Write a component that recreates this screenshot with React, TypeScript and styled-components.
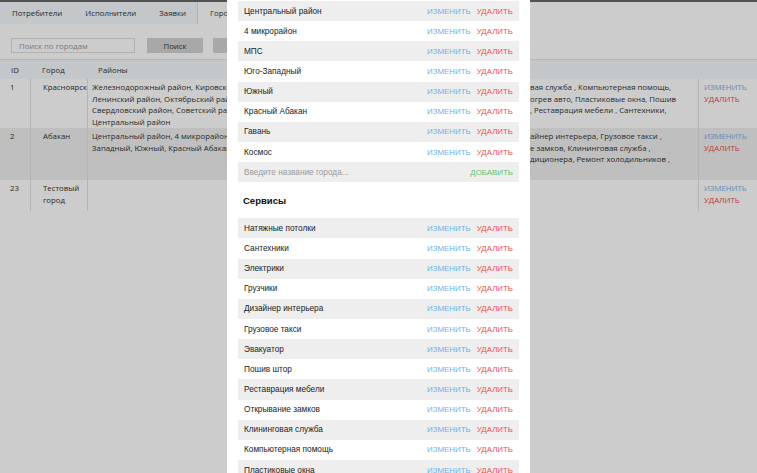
import React from "react";
import styled, { createGlobalStyle } from "styled-components";

const Global = createGlobalStyle`
  html, body { margin: 0; padding: 0; height: 100%; overflow: hidden; background: #fff; }
  #root { height: 100%; }
  * { box-sizing: border-box; }
`;

const Page = styled.div`
  font-family: "Open Sans", "Liberation Sans", sans-serif;
  font-size: 7.8px;
  color: #333;
  border-top: 2px solid #666;
  height: 100%;
  background: #fff;
`;

const Tabs = styled.nav`
  display: flex;
  height: 22px;
  background: #f4f9fd;
`;

const Tab = styled.div<{ $active?: boolean }>`
  display: flex;
  align-items: center;
  padding: 0 11px 0 12px;
  background: ${(p) => (p.$active ? "#ffffff" : "transparent")};
  border-left: ${(p) => (p.$active ? "1px solid #dde2e7" : "none")};
  flex: ${(p) => (p.$active ? "1" : "none")};
`;

const SearchBar = styled.div`
  display: flex;
  align-items: center;
  padding: 14px 11px 6px;
`;

const SearchInput = styled.div`
  width: 124px;
  height: 15px;
  border: 1px solid #dedede;
  background: #fff;
  color: #999;
  padding-left: 7px;
  display: flex;
  align-items: center;
`;

const GrayButton = styled.div<{ $w: number; $ml: number }>`
  width: ${(p) => p.$w}px;
  height: 15px;
  margin-left: ${(p) => p.$ml}px;
  background: #d3d3d3;
  display: flex;
  align-items: center;
  justify-content: center;
  color: #333;
`;

const Grid = styled.div`
  display: grid;
  grid-template-columns: 30px 57px 250px 361px 59px;
`;

const HeadRow = styled(Grid)`
  height: 20px;
  background: #f4f9fd;
  border-top: 1px solid #e4e4e4;
  align-items: center;
`;

const HeadCell = styled.div<{ $pl: number }>`
  padding-left: ${(p) => p.$pl}px;
`;

const BodyRow = styled(Grid)<{ $h: number; $shade?: boolean }>`
  height: ${(p) => p.$h}px;
  background: ${(p) => (p.$shade ? "#efefef" : "#ffffff")};
  line-height: 11.6px;
`;

const Cell = styled.div<{ $pl: number; $line?: boolean }>`
  padding: 3px 2px 0 ${(p) => p.$pl}px;
  border-left: ${(p) => (p.$line ? "1px solid #e2e2e2" : "none")};
  white-space: nowrap;
  overflow: hidden;
`;

const Line = styled.div``;

const ServiceLine = styled.div`
  display: flex;
`;

const ServiceHead = styled.span`
  flex: 0 0 189px;
  display: flex;
  justify-content: flex-end;
  overflow: hidden;
`;

const ActLink = styled.div<{ $kind: "edit" | "del" }>`
  text-transform: uppercase;
  color: ${(p) => (p.$kind === "edit" ? "#6eb2ea" : "#ea4b4b")};
`;

const Overlay = styled.div`
  position: fixed;
  inset: 0;
  background: rgba(0, 0, 0, 0.2);
  display: flex;
  justify-content: center;
`;

const Modal = styled.div`
  width: 303px;
  height: 100%;
  background: #fff;
  padding: 1px 11px 0;
  overflow: hidden;
  font-family: "Liberation Sans", Arial, sans-serif;
  font-size: 8.25px;
  color: #222;
`;

const ListRow = styled.div<{ $shade: boolean }>`
  height: 20.15px;
  display: flex;
  align-items: center;
  justify-content: space-between;
  padding: 0 6px;
  background: ${(p) => (p.$shade ? "#eeeeee" : "#ffffff")};
`;

const Actions = styled.div`
  display: flex;
  gap: 6px;
`;

const Action = styled.span<{ $color: string }>`
  color: ${(p) => p.$color};
  font-size: 7.9px;
  text-transform: uppercase;
`;

const Placeholder = styled.span`
  color: #9a9a9a;
`;

const SectionTitle = styled.h3`
  margin: 0;
  padding: 13px 5px 11px;
  font-size: 9.5px;
  line-height: 12px;
  font-weight: bold;
  color: #111;
`;

const districts = [
  "Центральный район",
  "4 микрорайон",
  "МПС",
  "Юго-Западный",
  "Южный",
  "Красный Абакан",
  "Гавань",
  "Космос",
];

const services = [
  "Натяжные потолки",
  "Сантехники",
  "Электрики",
  "Грузчики",
  "Дизайнер интерьера",
  "Грузовое такси",
  "Эвакуатор",
  "Пошив штор",
  "Реставрация мебели",
  "Открывание замков",
  "Клининговая служба",
  "Компьютерная помощь",
  "Пластиковые окна",
  "Ремонт кондиционера",
];

type SLine = [string, string];

const rows: {
  id: string;
  city: string[];
  h: number;
  shade: boolean;
  districts: string[];
  services: SLine[];
}[] = [
  {
    id: "1",
    city: ["Красноярск"],
    h: 49,
    shade: false,
    districts: [
      "Железнодорожный район, Кировский район,",
      "Ленинский район, Октябрьский район,",
      "Свердловский район, Советский район,",
      "Центральный район",
    ],
    services: [
      ["Натяжные потолки , Эвакуатор , Клининго", "вая служба , Компьютерная помощь,"],
      ["Ремонт кондиционера , Грузчики, Под", "огрев авто, Пластиковые окна, Пошив"],
      ["штор , Открывание замков , Грузовое такси", ", Реставрация мебели , Сантехники,"],
      ["Электрики", ""],
    ],
  },
  {
    id: "2",
    city: ["Абакан"],
    h: 52,
    shade: true,
    districts: [
      "Центральный район, 4 микрорайон, МПС, Юго-",
      "Западный, Южный, Красный Абакан, Гавань, Космос",
    ],
    services: [
      ["Натяжные потолки , Электрики , Диз", "айнер интерьера, Грузовое такси ,"],
      ["Эвакуатор , Пошив штор , Открывани", "е замков, Клининговая служба ,"],
      ["Пластиковые окна , Ремонт кон", "диционера, Ремонт холодильников ,"],
      ["Подогрев авто", ""],
    ],
  },
  {
    id: "23",
    city: ["Тестовый", "город"],
    h: 31,
    shade: false,
    districts: [],
    services: [],
  },
];

export default function App() {
  return (
    <>
      <Global />
      <Page>
        <Tabs>
          <Tab>Потребители</Tab>
          <Tab>Исполнители</Tab>
          <Tab>Заявки</Tab>
          <Tab $active>Города</Tab>
        </Tabs>
        <SearchBar>
          <SearchInput>Поиск по городам</SearchInput>
          <GrayButton $w={56} $ml={12}>Поиск</GrayButton>
          <GrayButton $w={70} $ml={10}>Добавить</GrayButton>
        </SearchBar>
        <HeadRow>
          <HeadCell $pl={11}>ID</HeadCell>
          <HeadCell $pl={12}>Город</HeadCell>
          <HeadCell $pl={11}>Районы</HeadCell>
          <HeadCell $pl={11}>Сервисы</HeadCell>
          <HeadCell $pl={5}></HeadCell>
        </HeadRow>
        {rows.map((r) => (
          <BodyRow key={r.id} $h={r.h} $shade={r.shade}>
            <Cell $pl={10}>{r.id}</Cell>
            <Cell $pl={12} $line>
              {r.city.map((c) => (
                <Line key={c}>{c}</Line>
              ))}
            </Cell>
            <Cell $pl={4} $line>
              {r.districts.map((d) => (
                <Line key={d}>{d}</Line>
              ))}
            </Cell>
            <Cell $pl={4}>
              {r.services.map(([head, tail]) => (
                <ServiceLine key={head}>
                  <ServiceHead>{head}</ServiceHead>
                  <span>{tail}</span>
                </ServiceLine>
              ))}
            </Cell>
            <Cell $pl={5} $line>
              <ActLink $kind="edit">Изменить</ActLink>
              <ActLink $kind="del">Удалить</ActLink>
            </Cell>
          </BodyRow>
        ))}
      </Page>
      <Overlay>
        <Modal>
          {districts.map((d, i) => (
            <ListRow key={d} $shade={i % 2 === 0}>
              <span>{d}</span>
              <Actions>
                <Action $color="#6eb2ea">Изменить</Action>
                <Action $color="#ee4f4f">Удалить</Action>
              </Actions>
            </ListRow>
          ))}
          <ListRow $shade>
            <Placeholder>Введите название города...</Placeholder>
            <Action $color="#5cc46e">Добавить</Action>
          </ListRow>
          <SectionTitle>Сервисы</SectionTitle>
          {services.map((s, i) => (
            <ListRow key={s} $shade={i % 2 === 0}>
              <span>{s}</span>
              <Actions>
                <Action $color="#6eb2ea">Изменить</Action>
                <Action $color="#ee4f4f">Удалить</Action>
              </Actions>
            </ListRow>
          ))}
        </Modal>
      </Overlay>
    </>
  );
}
